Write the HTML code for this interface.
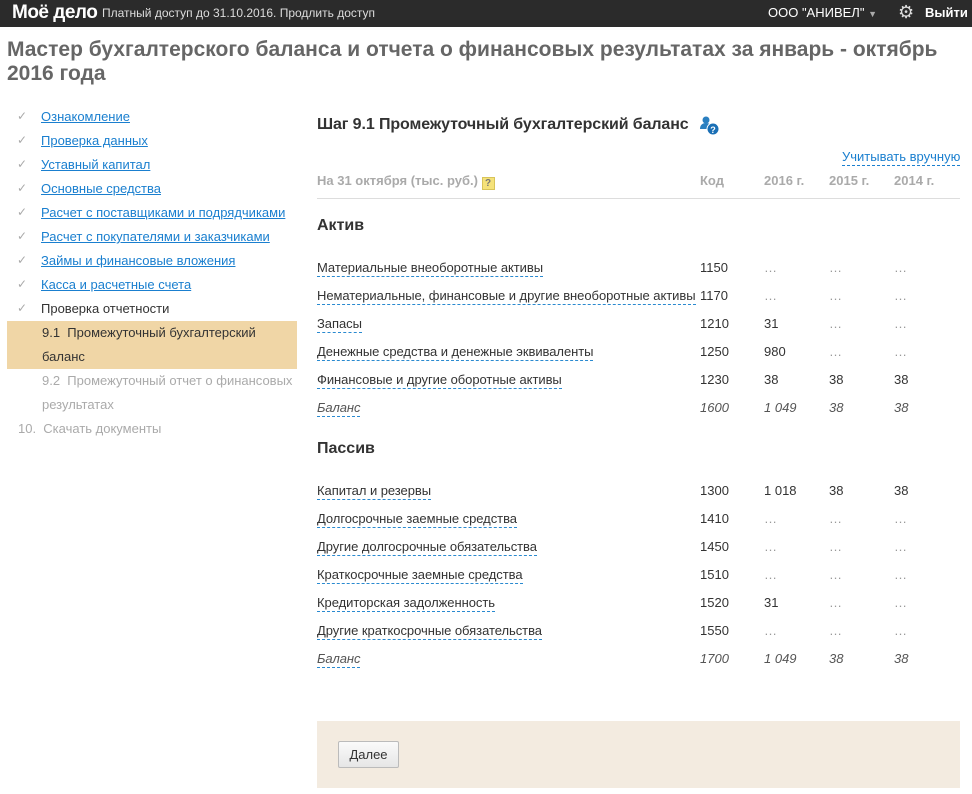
<!DOCTYPE html>
<html><head><meta charset="utf-8">
<style>
*{margin:0;padding:0;box-sizing:border-box}
body{width:972px;height:794px;overflow:hidden;background:#fff;font-family:"Liberation Sans",Arial,sans-serif;font-size:13px;color:#333;position:relative}
.top{position:absolute;left:0;top:0;width:972px;height:27px;background:#2b2b2b;color:#fff}
.abs{position:absolute;white-space:nowrap}
h1{position:absolute;left:7px;top:38px;font-size:21px;line-height:24px;color:#666;font-weight:bold;width:945px}
.side a{color:#1a7fcf;text-decoration:underline}
.chk{color:#aaa;font-size:12px}
.lbl{border-bottom:1px dashed #2a8ad0;line-height:16px;letter-spacing:-0.05px}
.it{font-style:italic}
.dim{color:#aaa}
</style></head><body>
<div class="top">
<div class="abs" style="left:12px;top:2px;font-size:19px;font-weight:bold;letter-spacing:-0.5px">Моё дело</div>
<div class="abs" style="left:102px;top:6px;font-size:12px;color:#ddd">Платный доступ до 31.10.2016. Продлить доступ</div>
<div class="abs" style="left:768px;top:5px;font-size:13px">ООО "АНИВЕЛ" <span style="font-size:9px;color:#aaa">▼</span></div>
<div class="abs" style="left:898px;top:2px;font-size:18px;color:#ddd">⚙</div>
<div class="abs" style="left:925px;top:5px;font-size:13px;font-weight:bold">Выйти</div>
</div>
<h1>Мастер бухгалтерского баланса и отчета о финансовых результатах за январь - октябрь 2016 года</h1>

<div class="side">
<div class="abs" style="left:7px;top:321px;width:290px;height:48px;background:#f0d6a6"></div>
<div class="abs chk" style="left:17px;top:109px">✓</div><div class="abs" style="left:41px;top:109px"><a>Ознакомление</a></div>
<div class="abs chk" style="left:17px;top:133px">✓</div><div class="abs" style="left:41px;top:133px"><a>Проверка данных</a></div>
<div class="abs chk" style="left:17px;top:157px">✓</div><div class="abs" style="left:41px;top:157px"><a>Уставный капитал</a></div>
<div class="abs chk" style="left:17px;top:181px">✓</div><div class="abs" style="left:41px;top:181px"><a>Основные средства</a></div>
<div class="abs chk" style="left:17px;top:205px">✓</div><div class="abs" style="left:41px;top:205px"><a>Расчет с поставщиками и подрядчиками</a></div>
<div class="abs chk" style="left:17px;top:229px">✓</div><div class="abs" style="left:41px;top:229px"><a>Расчет с покупателями и заказчиками</a></div>
<div class="abs chk" style="left:17px;top:253px">✓</div><div class="abs" style="left:41px;top:253px"><a>Займы и финансовые вложения</a></div>
<div class="abs chk" style="left:17px;top:277px">✓</div><div class="abs" style="left:41px;top:277px"><a>Касса и расчетные счета</a></div>
<div class="abs chk" style="left:17px;top:301px">✓</div><div class="abs" style="left:41px;top:301px">Проверка отчетности</div>
<div class="abs" style="left:42px;top:325px">9.1&nbsp;&nbsp;Промежуточный бухгалтерский</div>
<div class="abs" style="left:42px;top:349px">баланс</div>
<div class="abs dim" style="left:42px;top:373px">9.2&nbsp;&nbsp;Промежуточный отчет о финансовых</div>
<div class="abs dim" style="left:42px;top:397px">результатах</div>
<div class="abs dim" style="left:18px;top:421px">10.&nbsp;&nbsp;Скачать документы</div>
</div>

<div class="abs" style="left:317px;top:116px;font-size:16px;font-weight:bold;color:#333;letter-spacing:-0.1px">Шаг 9.1 Промежуточный бухгалтерский баланс</div>
<svg class="abs" style="left:700px;top:116px" width="20" height="20" viewBox="0 0 20 20"><circle cx="6" cy="4" r="3.5" fill="#2a7fc0"/><path d="M0 13c0-4 2.5-6 6-6s6 2 6 6z" fill="#2a7fc0"/><circle cx="13" cy="13" r="6" fill="#1a6fb5" stroke="#fff" stroke-width="1"/><text x="13" y="17" font-size="9" font-weight="bold" fill="#fff" text-anchor="middle" font-family="Liberation Sans">?</text></svg>
<div class="abs" style="left:842px;top:149px;color:#1a7fcf;border-bottom:1px dashed #1a7fcf;line-height:16px">Учитывать вручную</div>
<div class="abs" style="left:317px;top:173px;color:#aaa;font-weight:bold">На 31 октября (тыс. руб.) <span style="display:inline-block;width:13px;height:13px;background:#f5e27a;border:1px solid #d8c45a;color:#777;font-size:10px;text-align:center;line-height:11px;vertical-align:-1px">?</span></div>
<div class="abs" style="left:700px;top:173px;color:#aaa;font-weight:bold">Код</div>
<div class="abs" style="left:764px;top:173px;color:#aaa;font-weight:bold">2016 г.</div>
<div class="abs" style="left:829px;top:173px;color:#aaa;font-weight:bold">2015 г.</div>
<div class="abs" style="left:894px;top:173px;color:#aaa;font-weight:bold">2014 г.</div>
<div class="abs" style="left:317px;top:198px;width:643px;height:1px;background:#ddd"></div>

<div class="abs" style="left:317px;top:217px;font-size:16px;font-weight:bold">Актив</div>
<div class="abs" style="left:317px;top:440px;font-size:16px;font-weight:bold">Пассив</div>

<div id="rows"></div>
<div class="abs" style="left:317px;top:721px;width:643px;height:67px;background:#f3ebe0"></div>
<div class="abs" style="left:338px;top:741px;width:61px;height:27px;border:1px solid #bbb;border-radius:2px;background:linear-gradient(#fafafa,#e6e6e6);text-align:center;line-height:25px;color:#333">Далее</div>

<script>
var rows=[
[260,"Материальные внеоборотные активы","1150","…","…","…"],
[288,"Нематериальные, финансовые и другие внеоборотные активы","1170","…","…","…"],
[316,"Запасы","1210","31","…","…"],
[344,"Денежные средства и денежные эквиваленты","1250","980","…","…"],
[372,"Финансовые и другие оборотные активы","1230","38","38","38"],
[400,"Баланс","1600","1 049","38","38",1],
[483,"Капитал и резервы","1300","1 018","38","38"],
[511,"Долгосрочные заемные средства","1410","…","…","…"],
[539,"Другие долгосрочные обязательства","1450","…","…","…"],
[567,"Краткосрочные заемные средства","1510","…","…","…"],
[595,"Кредиторская задолженность","1520","31","…","…"],
[623,"Другие краткосрочные обязательства","1550","…","…","…"],
[651,"Баланс","1700","1 049","38","38",1]];
var h="";rows.forEach(function(r){var c=r[6]?' it':'';var col=r[6]?'#555':'#333';
h+='<div class="abs lbl'+c+'" style="left:317px;top:'+r[0]+'px;color:'+col+'">'+r[1]+'</div>';
[700,764,829,894].forEach(function(x,i){var v=r[i+2];h+='<div class="abs'+c+'" style="left:'+x+'px;top:'+r[0]+'px;color:'+(v=="…"?"#999":col)+'">'+v+'</div>';});});
document.getElementById("rows").innerHTML=h;
</script>
</body></html>
